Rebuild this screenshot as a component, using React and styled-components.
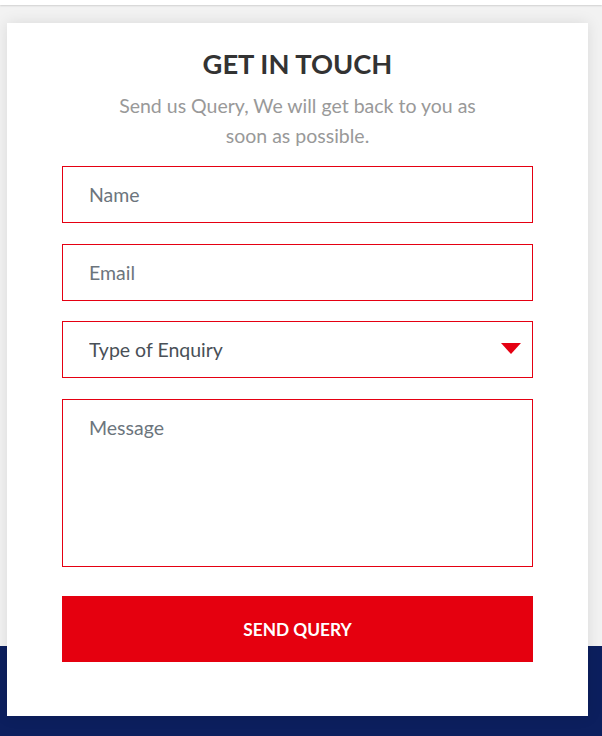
import React from "react";
import styled, { createGlobalStyle } from "styled-components";

const Global = createGlobalStyle`
  html, body { margin: 0; padding: 0; }
  body { font-family: Lato, "Open Sans", Arial, sans-serif; background: #f2f2f2; }
  * { box-sizing: border-box; }
`;

const Page = styled.div`
  min-height: 736px;
  background: linear-gradient(to bottom, #f2f2f2 0, #f2f2f2 646px, #0c1f5e 646px, #0c1f5e 100%);
  display: flex;
  flex-direction: column;
`;

const TopBar = styled.div`
  height: 5px;
  background: #ffffff;
  box-shadow: 0 1px 2px rgba(0, 0, 0, 0.14);
`;

const Card = styled.div`
  width: 581px;
  margin: 18px 0 20px 7px;
  background: #ffffff;
  box-shadow: 0 0 14px rgba(0, 0, 0, 0.1);
  padding: 24px 55px 54px;
  display: flex;
  flex-direction: column;
  align-items: stretch;
`;

const Title = styled.h2`
  margin: 0;
  font-family: Lato, sans-serif;
  font-weight: 700;
  font-size: 27.3px;
  line-height: 34px;
  color: #333333;
  text-align: center;
`;

const Subtitle = styled.p`
  margin: 10px auto 15px;
  max-width: 372px;
  font-family: Lato, sans-serif;
  font-size: 19.5px;
  line-height: 30px;
  color: #999999;
  text-align: center;
`;

const Form = styled.form`
  display: flex;
  flex-direction: column;
  gap: 20.5px;
`;

const fieldBase = `
  width: 100%;
  border: 1px solid #e50012;
  border-radius: 0;
  background: #ffffff;
  font-family: Lato, sans-serif;
  font-size: 19.5px;
  outline: none;
  margin: 0;
`;

const Input = styled.input`
  ${fieldBase}
  height: 57px;
  padding: 0 26px;
  color: #495057;
  &::placeholder { color: #6c757d; opacity: 1; }
`;

const SelectWrap = styled.div`
  position: relative;
`;

const Select = styled.select`
  ${fieldBase}
  height: 57px;
  padding: 0 26px;
  color: #495057;
  appearance: none;
  -webkit-appearance: none;
`;

const Arrow = styled.span`
  position: absolute;
  right: 12px;
  top: 22px;
  width: 0;
  height: 0;
  border-left: 10px solid transparent;
  border-right: 10px solid transparent;
  border-top: 11px solid #e50012;
  pointer-events: none;
`;

const TextArea = styled.textarea`
  ${fieldBase}
  height: 168px;
  padding: 14px 26px;
  line-height: 27px;
  resize: none;
  color: #495057;
  &::placeholder { color: #6c757d; opacity: 1; }
`;

const Button = styled.button`
  margin-top: 9px;
  height: 66px;
  border: none;
  background: #e5000f;
  color: #ffffff;
  font-family: Lato, sans-serif;
  font-weight: 700;
  font-size: 17.3px;
  text-transform: uppercase;
  cursor: pointer;
`;

export default function App() {
  return (
    <>
      <Global />
      <Page>
        <TopBar />
        <Card>
          <Title>GET IN TOUCH</Title>
          <Subtitle>Send us Query, We will get back to you as soon as possible.</Subtitle>
          <Form onSubmit={(e) => e.preventDefault()}>
            <Input type="text" placeholder="Name" />
            <Input type="email" placeholder="Email" />
            <SelectWrap>
              <Select defaultValue="">
                <option value="" disabled>Type of Enquiry</option>
                <option value="general">General</option>
                <option value="support">Support</option>
              </Select>
              <Arrow />
            </SelectWrap>
            <TextArea placeholder="Message" />
            <Button type="submit">Send Query</Button>
          </Form>
        </Card>
      </Page>
    </>
  );
}
